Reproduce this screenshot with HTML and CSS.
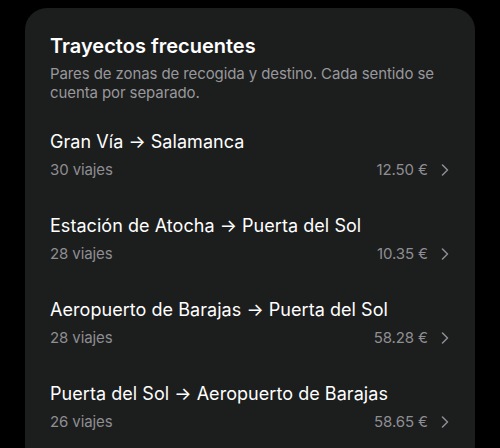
FILE: index.html
```html
<!DOCTYPE html>
<html>
<head>
    <meta charset="UTF-8">
    <title>Trayectos frecuentes</title>
    <link rel="stylesheet" href="styles.css">
</head>
<body>
    <div class="card">
        <h2 class="title">Trayectos frecuentes</h2>
        <p class="subtitle">Pares de zonas de recogida y destino. Cada sentido se cuenta por separado.</p>

        <div class="route">
            <div class="route-name">Gran Vía → Salamanca</div>
            <div class="route-meta">
                <span class="trips">30 viajes</span>
                <span class="price">12.50 €</span>
                <svg class="chevron" width="8" height="12" viewBox="0 0 8 12"><path d="M1.5 1l5 5-5 5" fill="none" stroke="currentColor" stroke-width="1.5" stroke-linecap="round" stroke-linejoin="round"/></svg>
            </div>
        </div>

        <div class="route">
            <div class="route-name">Estación de Atocha → Puerta del Sol</div>
            <div class="route-meta">
                <span class="trips">28 viajes</span>
                <span class="price">10.35 €</span>
                <svg class="chevron" width="8" height="12" viewBox="0 0 8 12"><path d="M1.5 1l5 5-5 5" fill="none" stroke="currentColor" stroke-width="1.5" stroke-linecap="round" stroke-linejoin="round"/></svg>
            </div>
        </div>

        <div class="route">
            <div class="route-name">Aeropuerto de Barajas → Puerta del Sol</div>
            <div class="route-meta">
                <span class="trips">28 viajes</span>
                <span class="price">58.28 €</span>
                <svg class="chevron" width="8" height="12" viewBox="0 0 8 12"><path d="M1.5 1l5 5-5 5" fill="none" stroke="currentColor" stroke-width="1.5" stroke-linecap="round" stroke-linejoin="round"/></svg>
            </div>
        </div>

        <div class="route">
            <div class="route-name">Puerta del Sol → Aeropuerto de Barajas</div>
            <div class="route-meta">
                <span class="trips">26 viajes</span>
                <span class="price">58.65 €</span>
                <svg class="chevron" width="8" height="12" viewBox="0 0 8 12"><path d="M1.5 1l5 5-5 5" fill="none" stroke="currentColor" stroke-width="1.5" stroke-linecap="round" stroke-linejoin="round"/></svg>
            </div>
        </div>
    </div>
</body>
</html>
```

FILE: styles.css
```css
body {
    margin: 0;
    background-color: #000;
    font-family: Inter, 'Noto Sans', sans-serif;
    color: #fff;
}
.card {
    margin: 8px 0 0 25px;
    width: 450px;
    box-sizing: border-box;
    padding: 26px 25px 20px;
    background-color: #1c1d1d;
    border-radius: 22px;
}
.title {
    margin: 0;
    font-size: 20px;
    line-height: 24px;
    font-weight: 600;
}
.subtitle {
    margin: 6px 0 0;
    font-size: 15px;
    line-height: 19px;
    letter-spacing: -0.1px;
    color: #98989c;
}
.route {
    padding-top: 18px;
    height: 66px;
}
.route:first-of-type {
    padding-top: 28px;
}
.route-name {
    font-size: 18px;
    line-height: 24px;
    letter-spacing: 0.05px;
}
.route-meta {
    display: flex;
    align-items: center;
    margin-top: 6px;
    font-size: 15px;
    line-height: 20px;
    letter-spacing: -0.1px;
    color: #8e8e93;
}
.trips {
    flex: 1;
}
.chevron {
    margin: 0 1px 0 13px;
}
```
